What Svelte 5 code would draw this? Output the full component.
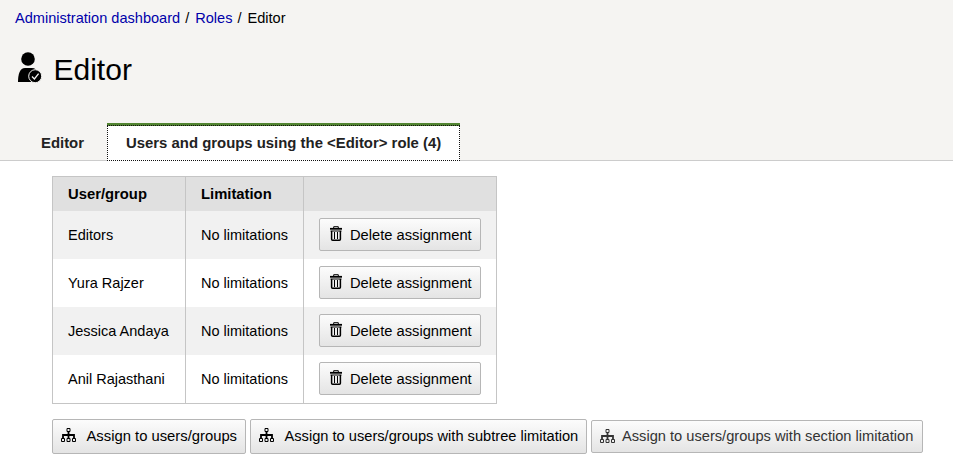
<script>
  const members = ['Editors', 'Yura Rajzer', 'Jessica Andaya', 'Anil Rajasthani'];
</script>

{#snippet tree()}
  <svg class="tree" width="15" height="15" viewBox="0 0 15 15" fill="none" stroke="currentColor">
    <path d="M6 .5h3v3H6zM.5 10.5h3v3h-3zM6 10.5h3v3H6zM11.5 10.5h3v3h-3z" stroke-width="1" />
    <path d="M7.5 4v6M2 10V7h11v3" stroke-width="1.8" />
  </svg>
{/snippet}

<div class="page">
  <header>
    <nav class="crumbs">
      <a href="#dashboard">Administration dashboard</a><i>/</i><a href="#roles">Roles</a><i>/</i><span>Editor</span>
    </nav>
    <div class="title">
      <svg width="24" height="31" viewBox="0 0 24 31">
        <circle cx="10" cy="7" r="6.8" />
        <path d="M0 30C0 22 2 16 7 16h7c3 0 5 2 6 5V30z" />
        <circle cx="17.2" cy="24.2" r="6.5" stroke="#f5f4f2" stroke-width="1" />
        <path d="M14 24.5l2.4 2.4 4.2-5.3" fill="none" stroke="#f5f4f2" stroke-width="1.3" />
      </svg>
      <h1>Editor</h1>
    </div>
    <div class="tabs">
      <div class="tab first">Editor</div>
      <div class="tab active"><span>Users and groups using the &lt;Editor&gt; role (4)</span></div>
    </div>
  </header>

  <main>
    <table>
      <thead>
        <tr><th class="name">User/group</th><th class="limit">Limitation</th><th></th></tr>
      </thead>
      <tbody>
        {#each members as member}
          <tr>
            <td>{member}</td>
            <td>No limitations</td>
            <td>
              <button class="delete">
                <svg width="12" height="15" viewBox="0 0 12 15" fill="none" stroke="currentColor">
                  <path d="M3.7 2V.7h4.6V2" />
                  <path d="M0 2.8h12" stroke-width="1.8" />
                  <path d="M.5 5h11" stroke-width="1" />
                  <path d="M1.6 5v8.2q0 1 1 1h6.8q1 0 1-1V5" stroke-width="1.5" />
                  <path d="M4.5 6v7M7.5 6v7" stroke-width="1" />
                </svg>
                <span>Delete assignment</span>
              </button>
            </td>
          </tr>
        {/each}
      </tbody>
    </table>
    <div class="actions">
      <button class="one">{@render tree()}<span>Assign to users/groups</span></button>
      <button class="two">{@render tree()}<span>Assign to users/groups with subtree limitation</span></button>
      <button class="three">{@render tree()}<span>Assign to users/groups with section limitation</span></button>
    </div>
  </main>
</div>

<style>
  :global(body) { margin: 0; background: #fff; }
  .page { width: 953px; height: 473px; overflow: hidden; background: #fff; color: #000; font: 14.65px/18px "Liberation Sans", Arial, sans-serif; }
  header { box-sizing: border-box; height: 161px; background: #f5f4f2; border-bottom: 1px solid #ccc; display: flex; flex-direction: column; }
  .crumbs { display: flex; flex: none; height: 18px; padding: 9px 0 0 15px; font-size: 14.57px; white-space: nowrap; }
  .crumbs a { color: #00a; text-decoration: none; }
  .crumbs i { font-style: normal; margin: 0 6px 0 5px; }
  .title { display: flex; flex: none; padding: 25px 0 0 18px; height: 71px; box-sizing: border-box; }
  .title svg { flex: none; }
  h1 { margin: 0 0 0 11.5px; font-size: 30px; line-height: 36px; font-weight: 400; }
  .tabs { display: flex; flex: none; margin-top: 25px; height: 38px; font-size: 14.9px; font-weight: 700; color: #222; white-space: nowrap; }
  .tab { box-sizing: border-box; line-height: 18px; height: 38px; padding-top: 11px; }
  .first { width: 107px; padding-left: 41px; }
  .active { width: 353px; border-top: 2px solid #518431; background: #fff; padding: 0; }
  .active span { display: block; box-sizing: border-box; height: 36px; border: 1px dotted #111; padding: 8px 0 0 18px; background: linear-gradient(#518431 0 1px, #fff 1px) border-box; }
  main { padding: 15px 0 0 52px; }
  table { border-collapse: separate; border-spacing: 0; box-sizing: border-box; width: 445px; border: 1px solid #c5c5c5; table-layout: fixed; }
  th, td { box-sizing: border-box; padding: 0 0 0 15px; text-align: left; border-right: 1px solid #c5c5c5; white-space: nowrap; }
  th:last-child, td:last-child { border-right: 0; }
  th { height: 34px; font-size: 14.8px; background: #e0e0e0; }
  .name { width: 133px; }
  .limit { width: 118px; }
  td { height: 48px; font-size: 14.5px; vertical-align: middle; }
  td:last-child { padding-bottom: 2px; }
  tbody tr:nth-child(odd) { background: #f1f1f1; }
  button { box-sizing: border-box; display: flex; align-items: center; margin: 0; padding: 0 0 0 7.5px; border: 1px solid #b6b6b6; border-radius: 2px; background: linear-gradient(#fcfcfc, #e4e4e4); color: #000; font: inherit; white-space: nowrap; }
  button svg { flex: none; }
  .delete { width: 162px; height: 33px; padding: 1px 0 0 9.5px; font-size: 14.7px; }
  .delete svg { margin: -2px 8.5px 0 0; }
  .actions { display: flex; align-items: center; gap: 4px; margin-top: 15px; height: 35px; }
  .actions button { height: 35px; padding-bottom: 2px; }
  .tree { margin-right: 11px; }
  .one { width: 194px; font-size: 14.8px; }
  .two { width: 337px; }
  .actions .three { width: 332px; height: 33px; padding-bottom: 1px; color: #333; }
  .three .tree { margin-right: 7.5px; }
</style>
